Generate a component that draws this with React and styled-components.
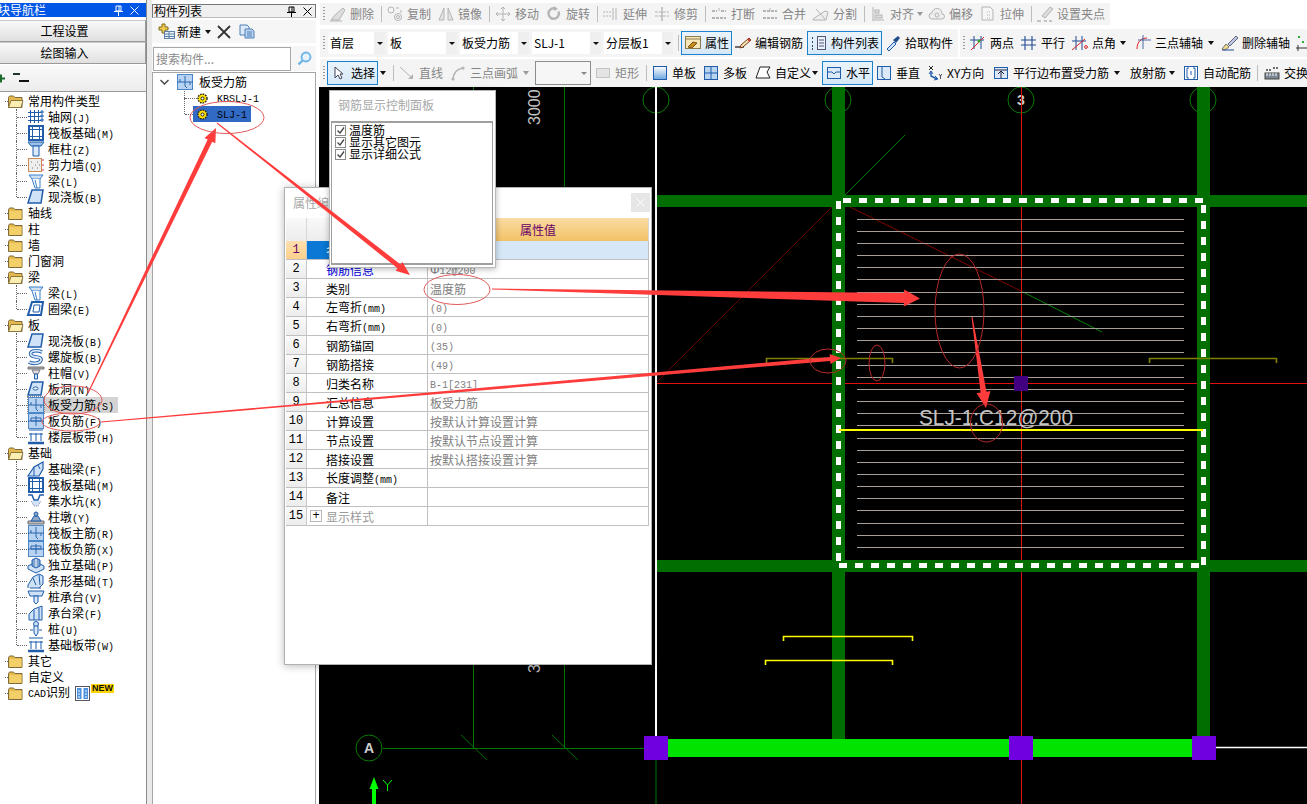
import React from 'react';
import styled, { createGlobalStyle } from 'styled-components';

const Global = createGlobalStyle`
  html, body { margin: 0; padding: 0; background: #fff; }
  body { font-family: "Noto Sans CJK SC", "Liberation Sans", sans-serif; font-size: 12px; line-height: 16px; color: #000; }
  * { box-sizing: border-box; }
`;

const Page = styled.div`position: relative; display: flex; width: 1307px; height: 804px; overflow: hidden; background: #fff;`;

/* ---------- shared text ---------- */
const Latin = styled.span`font-family: "Liberation Mono", monospace; font-size: 10px;`;
const Mixed = ({ text }) => text.split(/([\x00-\x7f]+)/).map((p, i) => (/^[\x00-\x7f]+$/.test(p) ? <Latin key={i}>{p}</Latin> : p));

const Svg = ({ children, w = 16, h = 16, vb }) => (
  <svg width={w} height={h} viewBox={vb || `0 0 ${w} ${h}`} fill="none" style={{ display: 'block', overflow: 'visible' }}>{children}</svg>
);

/* ---------- icons: dimmed toolbar ---------- */
const G = '#b4b4b4';
const dim = { stroke: G, strokeWidth: 1 };
const B = '#1f5dab';
const ICONS = {
  erase: <><path d="M1 14h8l6-10-2-2-8 7z" fill="#dedede" {...dim} /><path d="M0 15h12" {...dim} /></>,
  copy: <><circle cx="4" cy="4" r="3" {...dim} /><circle cx="11" cy="11" r="3.5" {...dim} /><circle cx="11" cy="11" r="1.5" {...dim} /><path d="M9 2h3M14 4v3" {...dim} /></>,
  mirror: <><path d="M1 14 6 2v12zM15 14 10 2v12z" fill="#e4e4e4" {...dim} /></>,
  move: <path d="M8 1v14M1 8h14M8 1 6 3M8 1l2 2M8 15l-2-2M8 15l2-2M1 8l2-2M1 8l2 2M15 8l-2-2M15 8l-2 2" {...dim} />,
  rotate: <><path d="M12.5 5.5a5.2 5.2 0 1 1-3.5-3" stroke={G} strokeWidth="2.4" /><path d="M8 0l4 3-4 2z" fill={G} /></>,
  extend: <><path d="M13 2v12M10 2v12" {...dim} /><path d="M0 6h8M0 10h8" {...dim} strokeDasharray="2 1" /></>,
  trim: <><path d="M8 1v14M1 6h14M1 10h14" {...dim} strokeDasharray="3 1" /><path d="M8 1v14" {...dim} /></>,
  cut: <><path d="M1 5h5M10 5h5M1 12h14" {...dim} strokeWidth="2" strokeDasharray="3 1" /><path d="M8 2v3" {...dim} /></>,
  merge: <><path d="M1 5h14M1 12h14" {...dim} strokeWidth="2" strokeDasharray="3 1" /><path d="M8 2v3" {...dim} /></>,
  split: <><path d="M0 13 12 5l3 1-2 8H0z" fill="#eee" {...dim} /><path d="M3 3l9 10" {...dim} /></>,
  align: <><path d="M3 1v14M3 14h11" {...dim} /><rect x="5" y="4" width="4" height="3" fill="#ddd" {...dim} /><rect x="5" y="9" width="7" height="3" fill="#ddd" {...dim} /></>,
  offset: <><path d="M3 13a3 3 0 0 1 0-6 5 5 0 0 1 10 1 2.5 2.5 0 0 1 0 5z" fill="#eee" {...dim} /><circle cx="8" cy="9" r="2" {...dim} /></>,
  stretch: <><path d="M2 1h8l3 3v10H2z" fill="#f6f6f6" {...dim} /><path d="M7 6h3M7 9h3M7 12h3" {...dim} strokeDasharray="1 1" /></>,
  handle: <><path d="M5 10 13 1l3 2-8 9z" fill="#ddd" {...dim} /><path d="M0 15h4M7 15h3M12 15h3" {...dim} strokeWidth="1.5" /></>,
  /* bright toolbar */
  props: <><rect x="0.5" y="1.5" width="15" height="12" fill="#f7e7b8" stroke="#8a7a50" /><path d="M0 4h16" stroke="#8a7a50" /><path d="M3 12l5-5 4 1-5 5z" fill="#c98a20" stroke="#7a5010" /></>,
  pen: <><path d="M0 12h9" stroke="#333" strokeWidth="1.4" /><path d="M6 10 14 3l2 2-8 7-3 1z" fill="#f5e6b0" stroke="#7a3a20" /><path d="M13 4l2 2" stroke="#c33" strokeWidth="2" /></>,
  list: <><path d="M1 3h2M1 7h2M1 11h2M1 14h2" stroke="#446" strokeDasharray="1 1" strokeWidth="2" /><rect x="6.5" y="1.5" width="8" height="13" fill="#eaf2fb" stroke="#557" /><path d="M8 5h5M8 8h5M8 11h5" stroke="#557" /></>,
  pick: <><path d="M2 14l7-7 2 2-7 7z" fill="#cfe4fa" stroke={B} /><path d="M8 5l5-4 2 2-4 5z" fill="#1f4d8b" /></>,
  twopt: <><path d="M4 1v13M11 1v13" stroke="#224a96" /><path d="M0 5h14" stroke="#224a96" /><path d="M1 15 14 2" stroke="#d22" /><circle cx="9" cy="6" r="1.6" fill="#3a3" /></>,
  para: <path d="M4 1v14M11 1v14M0 5h15M0 10h15" stroke="#224a96" strokeWidth="1.1" />,
  angle: <><path d="M4 1v14M10 1v14M0 6h14" stroke="#224a96" /><path d="M0 15 13 4" stroke="#d22" /><circle cx="14" cy="12" r="1.4" stroke="#d22" /></>,
  arc3: <><path d="M2 14C2 6 7 3 12 3" stroke="#d22" /><path d="M8 0v14M3 5h13" stroke="#224a96" strokeWidth=".8" /></>,
  delaxis: <><path d="M0 14 4 9l3 3-4 3z" fill="#f2d98e" stroke="#776" /><path d="M6 9l8-8 2 2-8 8z" fill="#bcc7e6" stroke="#667" /><path d="M0 15h12" stroke="#224a96" /></>,
  mini: <><rect x="2" y="1" width="2" height="2" fill="#3a3" /><rect x="6" y="6" width="2" height="2" fill="#3a3" /><path d="M0 13h12M2 10v6" stroke="#333" /></>,
  cursor: <path d="M4 2v11l3-3 2 4 2-1-2-4h3z" fill="#fff" stroke="#445" />,
  line: <><path d="M1 2l12 11" stroke={G} /><path d="M14 14H9l5-5z" fill={G} /></>,
  arc: <><path d="M3 15C3 8 7 4 13 3" stroke={G} strokeWidth="1.6" /><circle cx="3" cy="14" r="1.6" fill={G} /><circle cx="13" cy="3" r="1.6" fill={G} /></>,
  rect: <rect x="1.5" y="3.5" width="13" height="9" fill="#e4e4e4" stroke="#c4c4c4" />,
  single: <><rect x="1.5" y="1.5" width="13" height="13" fill="url(#sg)" stroke={B} /></>,
  multi: <><rect x="1.5" y="1.5" width="13" height="13" fill="#b9d4f0" stroke={B} /><path d="M8 1v14M1 8h14" stroke={B} /></>,
  custom: <path d="M5 2h10l-3 5 3 6H1z" fill="#fff" stroke="#222" />,
  horiz: <><rect x="1.5" y="2.5" width="13" height="11" fill="#dce9f8" stroke={B} /><path d="M2 7h4l2 2 2-2h4" stroke={B} /></>,
  vert: <><rect x="1.5" y="1.5" width="13" height="13" fill="#dce9f8" stroke={B} /><path d="M6 2v10l3 2" stroke={B} /></>,
  xy: <><path d="M2 1l4 4M6 1 2 5" stroke="#222" /><path d="M4 6v5l6 3" stroke={B} strokeWidth="1.4" /><path d="M2 9l2-3 2 3M8 11l3 3-4 1" stroke={B} /><path d="M12 9l1.5 2 1.5-2M13.5 11v3" stroke="#222" strokeWidth=".8" /></>,
  pbuild: <><rect x="1.5" y="2.5" width="13" height="11" fill="#dce9f8" stroke={B} /><path d="M8 13V7M5 9l3-3 3 3M2 5h12" stroke="#224" /></>,
  auto: <><rect x="1.5" y="1.5" width="13" height="13" fill="#fff" stroke={B} /><path d="M6 3H4v10h2M10 3h2v10h-2M8 6v4" stroke={B} /></>,
  swap: <><rect x="1" y="8" width="14" height="6" fill="#7a8794" stroke="#444" /><path d="M3 8v3M6 8v3M9 8v3M12 8v3" stroke="#fff" /><path d="M2 5h5M9 3h5" stroke="#444" strokeWidth="1.5" strokeDasharray="2 1" /></>,
  /* tree */
  grid: <><path d="M2.5 1v13M6.5 1v13M10.5 1v13M0 3.5h13M0 7.5h13M0 11.5h13" stroke={B} /><path d="M13 2h2v2h-2zM13 6h2v2h-2zM13 10h2v2h-2z" stroke={B} fill="#d9e8fa" /></>,
  raft: <><rect x="1" y="1" width="14" height="14" fill="#fff" stroke={B} strokeWidth="2" /><rect x="4.5" y="4.5" width="7" height="7" stroke={B} /><path d="M1 4.5h3M12 4.5h3M1 11.5h3M12 11.5h3M4.5 1v3M11.5 1v3M4.5 12v3M11.5 12v3" stroke={B} /></>,
  col: <><path d="M0 1h16l-3 4H3z" fill="#9cc2ea" stroke={B} /><path d="M5 5h6v10H5z" fill="#dbe9f9" stroke={B} /></>,
  wall: <><rect x="0.5" y="1.5" width="13" height="13" fill="#eee" stroke="#d08a50" /><path d="M3 5h1M7 8h1M4 11h1M9 11h1M9 5h1M11 8h1" stroke="#777" /><path d="M14 3h2M14 8h2M14 13h2" stroke="#c36" /></>,
  beam: <><path d="M1 2h14l-3 4H4z" fill="#cfe2f7" stroke="#3a7fc7" /><path d="M4 6l3 9h5V6" fill="#fff" stroke="#3a7fc7" /><path d="M7 7l2 8" stroke="#3a7fc7" /></>,
  slab: <path d="M4 1h11l-2 13H0z" fill="#cfe2f7" stroke={B} strokeWidth="1.5" />,
  ring: <><path d="M4 1h11l-2 13H0z" fill="#fff" stroke={B} strokeWidth="2" /><path d="M6 4h6l-1 7H5z" stroke={B} /></>,
  spiral: <><path d="M14 3C6 0 1 3 3 6s11 1 10 5-9 4-12 2" stroke={B} strokeWidth="3.6" /><path d="M14 3C6 0 1 3 3 6s11 1 10 5-9 4-12 2" stroke="#d9e8fa" strokeWidth="1.8" /></>,
  cap: <><path d="M0 2h16v2H0z" fill="#aaa" stroke="#777" /><path d="M4 5h8L10 9H6z" fill="#ddd" stroke="#778" /><path d="M6.5 9h3v5h-3z" fill="#cfe2f7" stroke={B} /></>,
  hole: <><path d="M4 1h11l-2 13H0z" fill="#cfe2f7" stroke={B} strokeWidth="1.5" /><ellipse cx="7.5" cy="7.5" rx="2.5" ry="1.5" fill="#fff" stroke={B} /></>,
  rebar: <><rect x="0.5" y="0.5" width="15" height="15" fill="#b8d3f1" stroke="#4c86c7" /><path d="M0 8h16M8 2v10l2 2M8 2" stroke="#2b66ad" /><path d="M3 5v3M13 8v3" stroke="#2b66ad" /></>,
  neg: <><rect x="0.5" y="0.5" width="15" height="15" fill="#b8d3f1" stroke="#4c86c7" /><path d="M3 5h10v3H3zM0 8h16M8 3v10" stroke="#2b66ad" /></>,
  band: <><path d="M1 1h14M3 4v8M8 4v8M13 4v8M1 5h14" stroke={B} /><path d="M0 14h16" stroke={B} strokeWidth="2.5" /></>,
  fbeam: <><path d="M0 15 6 6l9-5v7l-4 7z" fill="#cfe2f7" stroke={B} strokeWidth="1.2" /><path d="M6 6v9M10 4l2 4" stroke={B} /></>,
  pit: <><path d="M0 2h4l2 5h4l2-5h4" stroke={B} strokeWidth="1.5" /><path d="M3 8l3 5h4l3-5" fill="#cfe2f7" stroke="#88a" strokeDasharray="1 1" /></>,
  pier: <><path d="M0 12h16v3H0z" fill="#bbb" stroke="#667" /><path d="M3 12l3-5h4l3 5z" fill="#8fa8c8" stroke={B} /><circle cx="8" cy="5" r="2" fill="#8fa8c8" stroke={B} /></>,
  iso: <><path d="M0 9l8-4 8 4v3l-8 4-8-4z" fill="#cfe2f7" stroke={B} /><path d="M4 3l4-2 4 2v6l-4 2-4-2z" fill="#7fa3d0" stroke={B} /><path d="M8 2v8" stroke="#fff" /></>,
  strip: <><path d="M0 15v-3l5-8 6-3 4 2v8l-4 4" fill="#cfe2f7" stroke={B} /><path d="M2 15h11M5 5l3 7M11 2l1 10" stroke={B} /></>,
  capbed: <><path d="M0 2h16l-2 5H2z" fill="#cfe2f7" stroke={B} /><path d="M6 7h4v6l-2 2-2-2z" fill="#dbe9f9" stroke={B} /></>,
  capbeam: <><path d="M1 15V9l5-5 8-3v14z" fill="#cfe2f7" stroke={B} /><path d="M6 5v10M11 3v12" stroke={B} /></>,
  pile: <><circle cx="8" cy="3" r="2.5" fill="#cfe2f7" stroke={B} /><path d="M6 5h4v7l-2 3-2-3z" fill="#dbe9f9" stroke={B} /><path d="M2 9h3M11 9h3" stroke={B} /></>,
  cad: <><rect x="0.5" y="0.5" width="14" height="14" fill="#fff" stroke="#556" /><rect x="2" y="2" width="4.5" height="11" fill="#4a90dc" /><rect x="8.5" y="2" width="4.5" height="11" fill="#4a90dc" /><path d="M3 5h2M3 8h2M3 11h2M10 5h2M10 8h2M10 11h2" stroke="#fff" /></>,
};
const Icon = ({ name }) => <Svg>{ICONS[name]}</Svg>;

/* ---------- module nav panel ---------- */
const NavPanel = styled.aside`flex: 0 0 147px; height: 100%; overflow: hidden; border-right: 1px solid #8c8c8c;`;
const NavInner = styled.div`width: 162px; margin-left: -16px; padding-top: 3px; display: flex; flex-direction: column; height: 100%;`;
const NavTitle = styled.div`
  flex: 0 0 14px; display: flex; align-items: center; background: #0056e6; color: #fff;
  padding: 0 4px 0 2px; font-size: 12px; line-height: 14px;
`;
const TitleText = styled.span`flex: 1; white-space: nowrap;`;
const TitleBtn = styled.span`
  flex: 0 0 16px; height: 12px; display: flex; align-items: center; justify-content: center;
`;
const NavButton = styled.div`
  flex: 0 0 22px; margin-top: ${(p) => p.$t}px; display: flex; align-items: center; justify-content: center;
  background: linear-gradient(#f9f9f9, #e0e0e0); border-bottom: 1px solid #9a9a9a; border-right: 1px solid #9a9a9a; border-top: 1px solid #c8c8c8;
`;
const NavTools = styled.div`
  flex: 0 0 27px; margin-top: 1px; display: flex; align-items: center; gap: 7px; padding-left: 13px;
  background: linear-gradient(#fafafa, #ececec); border-bottom: 1px solid #9a9a9a;
`;
const Tree = styled.div`flex: 1; background: #fff; padding-top: 1px;`;
const Row = styled.div`
  position: relative; height: 16px; display: flex; align-items: center; white-space: nowrap;
  padding-left: ${(p) => p.$pl}px;
`;
const RootStub = styled.i`position: absolute; left: 21px; top: 8px; width: 3px; border-top: 1px dotted #666;`;
const ChildRow = styled(Row)`
  &::before { content: ""; position: absolute; left: 32px; top: 0; bottom: ${(p) => (p.$last ? '8px' : '0')}; border-left: 1px dotted #666; }
  &::after { content: ""; position: absolute; left: 33px; width: 10px; top: 8px; border-top: 1px dotted #666; }
`;
const RowIcon = styled.span`
  flex: 0 0 16px; height: 16px; position: relative; z-index: 1;
  ${(p) => p.$sel && 'outline: 1px dotted #888; outline-offset: 0;'}
`;
const RowLabel = styled.span`
  height: 16px; display: inline-block; padding: 0 4px 0 4px; background: ${(p) => (p.$sel ? '#d4d4d4' : 'transparent')};
`;
const FolderLabel = styled.span`padding-left: 5px;`;
const NewBadge = styled.b`
  align-self: flex-start; margin-top: -1px; background: #ffd400; color: #111; font: bold 9px/9px "Liberation Sans", sans-serif; padding: 0 1px; margin-left: 1px;
`;
const CadIcon = styled.span`flex: 0 0 15px; margin-left: 5px;`;

const Folder = ({ open }) => (
  <Svg w={15} h={13}>
    <path d="M.5 2.5 1.5 1h4l1.5 1.5h7v10H.5z" fill="#e5b94d" stroke="#7c6a3a" />
    {open
      ? <path d="M.5 12.5 3 5.5h12l-2 7z" fill="#fbeeb0" stroke="#8a7440" />
      : <rect x="1.5" y="4" width="12" height="8" fill="#f3cf6a" />}
  </Svg>
);

const TREE = [
  { f: '常用构件类型', open: true, kids: [['grid', '轴网(J)'], ['raft', '筏板基础(M)'], ['col', '框柱(Z)'], ['wall', '剪力墙(Q)'], ['beam', '梁(L)'], ['slab', '现浇板(B)']] },
  { f: '轴线' }, { f: '柱' }, { f: '墙' }, { f: '门窗洞' },
  { f: '梁', open: true, kids: [['beam', '梁(L)'], ['ring', '圈梁(E)']] },
  { f: '板', open: true, kids: [['slab', '现浇板(B)'], ['spiral', '螺旋板(B)'], ['cap', '柱帽(V)'], ['hole', '板洞(N)'], ['rebar', '板受力筋(S)', true], ['neg', '板负筋(F)'], ['band', '楼层板带(H)']] },
  { f: '基础', open: true, kids: [['fbeam', '基础梁(F)'], ['raft', '筏板基础(M)'], ['pit', '集水坑(K)'], ['pier', '柱墩(Y)'], ['rebar', '筏板主筋(R)'], ['neg', '筏板负筋(X)'], ['iso', '独立基础(P)'], ['strip', '条形基础(T)'], ['capbed', '桩承台(V)'], ['capbeam', '承台梁(F)'], ['pile', '桩(U)'], ['band', '基础板带(W)']] },
  { f: '其它' }, { f: '自定义' }, { f: 'CAD识别', badge: true },
];

const PinIcon = () => <Svg w={9} h={11}><path d="M2 1h5v5H2zM0 6.500h9M4.500 7v4" stroke="currentColor" /><path d="M5 1v5" stroke="currentColor" /></Svg>;
const CloseIcon = () => <Svg w={9} h={9}><path d="M.5.5l8 8M8.500.5l-8 8" stroke="currentColor" /></Svg>;

const Nav = () => (
  <NavPanel>
    <NavInner>
      <NavTitle>
        <TitleText>模块导航栏</TitleText>
        <TitleBtn><PinIcon /></TitleBtn><TitleBtn><CloseIcon /></TitleBtn>
      </NavTitle>
      <NavButton $t={3}>工程设置</NavButton>
      <NavButton $t={0}>绘图输入</NavButton>
      <NavTools>
        <Svg w={9} h={9}><path d="M0 4.500h8M4 .500v8" stroke="#1a6b2a" strokeWidth="2" /></Svg>
        <Svg w={16} h={10}><path d="M0 1h7" stroke="#233" strokeWidth="2" /><path d="M6 8h10" stroke="#111" strokeWidth="2" /></Svg>
      </NavTools>
      <Tree>
        {TREE.map((n, i) => (
          <React.Fragment key={i}>
            <Row $pl={24}>
              <RootStub />
              <Folder open={n.open} />
              <FolderLabel><Mixed text={n.f} /></FolderLabel>
              {n.badge && <><CadIcon><Svg w={15} h={15}>{ICONS.cad}</Svg></CadIcon><NewBadge>NEW</NewBadge></>}
            </Row>
            {n.kids && n.kids.map(([ic, t, sel], k) => (
              <ChildRow key={k} $pl={44} $last={k === n.kids.length - 1}>
                <RowIcon $sel={sel}><Icon name={ic} /></RowIcon>
                <RowLabel $sel={sel}><Mixed text={t} /></RowLabel>
              </ChildRow>
            ))}
          </React.Fragment>
        ))}
      </Tree>
    </NavInner>
  </NavPanel>
);

/* ---------- component list panel ---------- */
const Gutter = styled.div`flex: 0 0 5px; background: #e9e9e9;`;
const ListPanel = styled.section`flex: 0 0 164px; height: 100%; display: flex; flex-direction: column; padding-top: 4px;`;
const ListTitle = styled.div`
  flex: 0 0 14px; min-height: 0; display: flex; align-items: center; padding-left: 1px; background: #f0f0f0; border: 1px solid #777; border-bottom-color: #bbb; line-height: 12px;
`;
const ListTools = styled.div`flex: 0 0 23px; margin-top: 2px; display: flex; align-items: center; background: #f6f6f6; padding-left: 5px;`;
const NewLabel = styled.span`margin-left: 1px;`;
const Caret = styled.span`
  flex: 0 0 ${(p) => p.$w || 7}px; display: flex;
  &::before { content: ""; border-left: 3.5px solid transparent; border-right: 3.5px solid transparent; border-top: 4px solid ${(p) => p.$c || '#111'}; }
`;
const SearchRow = styled.div`flex: 0 0 25px; margin-top: 3px; display: flex; align-items: center; background: #f6f6f6;`;
const SearchBox = styled.div`
  width: 138px; height: 24px; margin-left: 1px; border: 1px solid #a8a8a8; background: #fff; color: #8a8a8a; font-size: 12px; padding: 3px 2px; line-height: 16px;
`;
const SearchBtn = styled.span`margin-left: 6px;`;
const ListTree = styled.div`flex: 1; margin-top: 1px; border: 1px solid #a6a6a6; border-bottom: 0; background: #fff; padding-top: 1px;`;
const LRow = styled.div`
  position: relative; height: 16px; display: flex; align-items: center; white-space: nowrap; padding-left: ${(p) => p.$pl}px;
`;
const LChild = styled(LRow)`
  &::before { content: ""; position: absolute; left: 31px; top: -8px; height: 16px; border-left: 1px dotted #666; }
  &::after { content: ""; position: absolute; left: 32px; top: 8px; width: 12px; border-top: 1px dotted #666; }
`;
const Selected = styled.span`
  display: flex; align-items: center; height: 16px; width: 58px; margin-left: -4px; padding-left: 4px; background: #316ac5; position: relative; z-index: 1;
`;
const LeafLabel = styled.span`margin-left: 9px;`;
const Label16 = styled.span`margin-left: 6px;`;
const Spacer = styled.span`flex: 0 0 ${(p) => p.$w}px;`;

const Gear = () => (
  <Svg w={11} h={11}>
    <circle cx="5.500" cy="5.500" r="4.500" fill="#ffe100" stroke="#222" strokeWidth="1.400" strokeDasharray="1.600 1" />
    <circle cx="5.500" cy="5.500" r="1.500" fill="#fff" stroke="#222" />
  </Svg>
);

const List = () => (
  <ListPanel>
    <ListTitle>
      <TitleText>构件列表</TitleText>
      <TitleBtn><PinIcon /></TitleBtn><TitleBtn><CloseIcon /></TitleBtn>
    </ListTitle>
    <ListTools>
      <Svg w={19} h={17}>
        <path d="M3 3h3V0h3v3h3v3H9v3H6V6H3z" transform="translate(-1 1)" fill="#f2cd52" stroke="#7f6a1c" />
        <rect x="7.500" y="8.500" width="10" height="7" fill="#eef4fb" stroke="#5b7fa8" />
        <path d="M8 11h9M8 13.500h9M12 9v6" stroke="#5b7fa8" />
      </Svg>
      <NewLabel>新建</NewLabel>
      <Spacer $w={4} />
      <Caret $w={12} />
      <Svg w={14} h={14}><path d="M1 1l12 12M13 1 1 13" stroke="#333" strokeWidth="1.800" /></Svg>
      <Spacer $w={8} />
      <Svg w={16} h={15}>
        <path d="M1 1h7l2 2v8H1z" fill="#dce9f8" stroke="#4f7fb5" />
        <path d="M6 5h7l2 2v7H6z" fill="#bcd6f2" stroke="#4f7fb5" />
        <path d="M8 8h5M8 10h5M8 12h5" stroke="#4f7fb5" />
      </Svg>
    </ListTools>
    <SearchRow>
      <SearchBox>搜索构件...</SearchBox>
      <SearchBtn>
        <Svg w={15} h={15}>
          <circle cx="9" cy="6" r="4.500" fill="#e6f3fd" stroke="#6db4e8" strokeWidth="1.800" />
          <path d="M5.500 9.500 1.500 13.500" stroke="#6db4e8" strokeWidth="2.400" />
        </Svg>
      </SearchBtn>
    </SearchRow>
    <ListTree>
      <LRow $pl={7}>
        <Svg w={9} h={6}><path d="M.5 1 4.500 5l4-4" stroke="#444" strokeWidth="1.400" /></Svg>
        <Spacer $w={8} />
        <RowIcon><Icon name="rebar" /></RowIcon>
        <Label16><Mixed text="板受力筋" /></Label16>
      </LRow>
      <LChild $pl={44}>
        <Gear />
        <LeafLabel><Mixed text="KBSLJ-1" /></LeafLabel>
      </LChild>
      <LChild $pl={44}>
        <Selected><Gear /><LeafLabel><Mixed text="SLJ-1" /></LeafLabel></Selected>
      </LChild>
    </ListTree>
  </ListPanel>
);

/* ---------- ribbon ---------- */
const Workspace = styled.main`flex: 1; min-width: 0; display: flex; flex-direction: column; padding-top: 3px;`;
const Bars = styled.div`display: flex; padding-left: 4px; margin-top: ${(p) => p.$t}px;`;
const Bar = styled.div`
  display: flex; align-items: center; height: ${(p) => p.$h}px; width: ${(p) => p.$w}px; background: #f4f4f4; overflow: hidden; flex: none; margin-left: ${(p) => p.$ml || 0}px;
`;
const Slot = styled.div`flex: 0 0 ${(p) => p.$w}px; height: 100%; display: flex; align-items: center; white-space: nowrap;`;
const Grip = styled(Slot)`
  padding-left: 3px;
  &::before { content: ""; width: 2px; height: 14px; background-image: linear-gradient(#999 50%, transparent 50%); background-size: 2px 3px; }
`;
const Sep = styled(Slot)`
  &::before { content: ""; height: 16px; border-left: 1px solid #bdbdbd; }
`;
const ToolIcon = styled.span`flex: 0 0 16px; height: 16px; margin-right: 4px;`;
const ToolLabel = styled.span`color: ${(p) => (p.$dim ? '#868686' : '#000')};`;
const ActiveBtn = styled.div`
  width: ${(p) => p.$w}px; height: 24px; display: flex; align-items: center; padding-left: 3px;
  border: 1px solid #1b82cf; background: linear-gradient(#eaf4fc, #d6e8f7);
`;
const ComboBox = styled.div`
  display: flex; width: ${(p) => p.$w}px; height: 22px; background: #fff; padding-left: 2px;
  align-items: center;
`;
const ComboText = styled.span`flex: 1;`;
const ComboArrow = styled.span`
  flex: 0 0 11px; align-self: stretch; display: flex; align-items: center; justify-content: center; background: #efefef;
  &::before { content: ""; border-left: 3px solid transparent; border-right: 3px solid transparent; border-top: 3px solid #111; }
`;
const SelectBox = styled.div`
  width: ${(p) => p.$w}px; height: 24px; display: flex; align-items: center; justify-content: flex-end; padding-right: 3px; border: 1px solid #8d8d8d; background: #f6f6f6;
  &::after { content: ""; border-left: 3px solid transparent; border-right: 3px solid transparent; border-top: 3px solid #888; }
`;

const Tools = ({ end, items }) => items.map((it, i) => {
  const w = (i + 1 < items.length ? items[i + 1].x : end) - it.x;
  if (it.k === 'grip') return <Grip key={i} $w={w} />;
  if (it.k === 'sep') return <Sep key={i} $w={w} />;
  if (it.k === 'caret') return <Slot key={i} $w={w}><Caret $c={it.c} /></Slot>;
  if (it.k === 'combo') return <Slot key={i} $w={w}><ComboBox $w={it.b}><ComboText>{it.t}</ComboText><ComboArrow /></ComboBox></Slot>;
  if (it.k === 'select') return <Slot key={i} $w={w}><SelectBox $w={it.b} /></Slot>;
  if (it.k === 'on') {
    return <Slot key={i} $w={w}><ActiveBtn $w={it.b}><ToolIcon><Icon name={it.i} /></ToolIcon><ToolLabel>{it.t}</ToolLabel></ActiveBtn></Slot>;
  }
  return (
    <Slot key={i} $w={w}>
      {it.i && <ToolIcon><Icon name={it.i} /></ToolIcon>}
      {it.t && <ToolLabel $dim={it.d}>{it.t}</ToolLabel>}
    </Slot>
  );
});

const grip = (x) => ({ x, k: 'grip' });
const sep = (x) => ({ x, k: 'sep' });
const car = (x, c) => ({ x, k: 'caret', c });
const dt = (x, i, t) => ({ x, i, t, d: true });
const tl = (x, i, t) => ({ x, i, t });

const R1 = [grip(320), dt(330, 'erase', '删除'), sep(381), dt(387, 'copy', '复制'), dt(438, 'mirror', '镜像'), sep(489), dt(495, 'move', '移动'), dt(546, 'rotate', '旋转'), sep(597), dt(603, 'extend', '延伸'), dt(654, 'trim', '修剪'), sep(705), dt(711, 'cut', '打断'), dt(762, 'merge', '合并'), dt(813, 'split', '分割'), sep(864), dt(870, 'align', '对齐'), car(917, '#999'), dt(929, 'offset', '偏移'), dt(980, 'stretch', '拉伸'), sep(1031), dt(1037, 'handle', '设置夹点')];
const R2A = [grip(320), { x: 328, k: 'combo', b: 57, t: '首层' }, { x: 388, k: 'combo', b: 69, t: '板' }, { x: 460, k: 'combo', b: 69, t: '板受力筋' }, { x: 532, k: 'combo', b: 69, t: 'SLJ-1' }, { x: 604, k: 'combo', b: 69, t: '分层板1' }, sep(678), { x: 681, k: 'on', b: 51, i: 'props', t: '属性' }, tl(735, 'pen', '编辑钢筋'), { x: 807, k: 'on', b: 75, i: 'list', t: '构件列表' }, tl(885, 'pick', '拾取构件')];
const R2B = [grip(960), tl(970, 'twopt', '两点'), tl(1021, 'para', '平行'), tl(1072, 'angle', '点角'), car(1120), tl(1135, 'arc3', '三点辅轴'), car(1208), tl(1222, 'delaxis', '删除辅轴'), tl(1296, 'mini')];
const R3 = [grip(320), { x: 327, k: 'on', b: 51, i: 'cursor', t: '选择' }, car(380), sep(393), dt(399, 'line', '直线'), dt(450, 'arc', '三点画弧'), car(523, '#999'), { x: 535, k: 'select', b: 56 }, dt(595, 'rect', '矩形'), sep(646), tl(652, 'single', '单板'), tl(703, 'multi', '多板'), tl(755, 'custom', '自定义'), car(812), { x: 822, k: 'on', b: 51, i: 'horiz', t: '水平' }, tl(876, 'vert', '垂直'), tl(927, 'xy', 'XY方向'), tl(993, 'pbuild', '平行边布置受力筋'), car(1114), tl(1130, null, '放射筋'), car(1169), tl(1183, 'auto', '自动配筋'), sep(1257), tl(1264, 'swap', '交换')];

const Ribbon = () => (
  <>
    <Bars $t={0}><Bar $w={790} $h={22}><Tools end={1110} items={R1} /></Bar></Bars>
    <Bars $t={4}>
      <Bar $w={638} $h={28}><Tools end={958} items={R2A} /></Bar>
      <Bar $w={347} $h={28} $ml={2}><Tools end={1307} items={R2B} /></Bar>
    </Bars>
    <Bars $t={2}><Bar $w={987} $h={28}><Tools end={1307} items={R3} /></Bar></Bars>
  </>
);

/* ---------- CAD canvas ---------- */
const CanvasWrap = styled.div`flex: 1; margin-left: 3px; background: #000; overflow: hidden;`;
const DG = '#006e00';
const Dashes = ({ n, x, y, dx, dy, w, h }) => Array.from({ length: n }, (_, i) => (
  <rect key={i} x={x + dx * i} y={y + dy * i} width={w} height={h} fill="#fff" />
));
const BARS = [219, 231, 243, 255, 267, 279, 292, 304, 316, 328, 340, 352, 365, 377, 389, 401, 413, 425, 438, 450, 462, 474, 486, 498, 510, 523, 535, 547];
const Bracket = ({ x1, x2, y, c, t = 5 }) => <path d={`M${x1 + .5} ${y + t}V${y + .5}H${x2 - .5}V${y + t}`} stroke={c} strokeWidth="1.6" fill="none" />;
const Tick = ({ x, y }) => <path d={`M${x - 12} ${y - 13}L${x + 14} ${y + 12}`} stroke="#006e00" />;
const Bubble = ({ x, y, t }) => (
  <>
    <circle cx={x} cy={y} r="13" fill="#000" stroke="#0a7a0a" />
    {t && <text x={x} y={y + 5} textAnchor="middle" fontFamily='"Liberation Sans", sans-serif' fontSize="14" fontWeight="bold" fill="#cfcfcf">{t}</text>}
  </>
);

const Canvas = () => (
  <CanvasWrap>
    <Svg w={988} h={717} vb="319 87 988 717">
      <defs>
        <linearGradient id="sg" x1="0" y1="0" x2="0" y2="1"><stop offset="0" stopColor="#fff" /><stop offset="1" stopColor="#6ea5e0" /></linearGradient>
      </defs>
      <path d="M473.500 87V748M564.500 87V748M656 760V804M383 748.500H644" stroke="#007800" />
      <Tick x={473} y={748} /><Tick x={564} y={748} />
      <path d="M832 207 656 383" stroke="#600000" />
      <path d="M850 207 1021 291" stroke="#800000" />
      <path d="M1021 291 1102 332" stroke="#008000" />
      <path d="M905 135 845 195" stroke="#007800" />
      <Bubble x={656} y={100} /><Bubble x={838} y={100} /><Bubble x={1021} y={100} t="3" /><Bubble x={1203} y={100} />
      <path d="M1021.500 87V804" stroke="#e01010" />
      <path d="M656 383.500H1307" stroke="#e01010" />
      {BARS.map((y) => <path key={y} d={`M857 ${y + .5}H1184`} stroke="#a89f98" />)}
      <rect x="656" y="195" width="651" height="12" fill={DG} />
      <rect x="656" y="560" width="651" height="12" fill={DG} />
      <rect x="832" y="87" width="13" height="652" fill={DG} />
      <rect x="1197" y="87" width="13" height="652" fill={DG} />
      <rect x="655" y="87" width="2" height="650" fill="#fff" />
      <Dashes n={23} x={843} y={198} dx={16} dy={0} w={8} h={5} />
      <Dashes n={23} x={839} y={563} dx={16} dy={0} w={8} h={5} />
      <Dashes n={23} x={836} y={201} dx={0} dy={16} w={5} h={8} />
      <Dashes n={23} x={1201} y={205} dx={0} dy={16} w={5} h={8} />
      <Bracket x1={766} x2={893} y={358} c="#808000" />
      <Bracket x1={1149} x2={1277} y={358} c="#808000" />
      <Bracket x1={783} x2={913} y={636} c="#ffff00" />
      <Bracket x1={765} x2={893} y={660} c="#ffff00" />
      <rect x="839" y="429" width="364" height="2" fill="#ffff00" />
      <rect x="1014" y="376" width="14" height="15" fill="#400080" />
      <text x="919" y="425" textLength="154" lengthAdjust="spacingAndGlyphs" fontFamily='"Liberation Sans", sans-serif' fontSize="22" fill="#c4c4c4">SLJ-1:C12@200</text>
      <text transform="translate(540 125) rotate(-90)" fontFamily='"Liberation Sans", sans-serif' fontSize="16" fill="#c4c4c4">3000</text>
      <text transform="translate(540 673) rotate(-90)" fontFamily='"Liberation Sans", sans-serif' fontSize="16" fill="#c4c4c4">3000</text>
      <circle cx="369" cy="748" r="13" fill="#000" stroke="#0a7a0a" />
      <text x="369" y="753" textAnchor="middle" fontFamily='"Liberation Sans", sans-serif' fontSize="14" fontWeight="bold" fill="#cfcfcf">A</text>
      <rect x="668" y="739" width="524" height="18" fill="#00e400" />
      <rect x="644" y="736" width="24" height="24" fill="#7000e0" />
      <rect x="1009" y="736" width="24" height="24" fill="#7000e0" />
      <rect x="1192" y="736" width="24" height="24" fill="#7000e0" />
      <path d="M1216 747.500H1307" stroke="#fff" strokeWidth="1.600" />
      <path d="M372 804V789H369.500L374 777 378.500 789H376V804z" fill="#00ff00" />
      <path d="M383 780l4.500 5 4.500-5M387.500 785v6" stroke="#00ff00" />
    </Svg>
  </CanvasWrap>
);

/* ---------- floating windows ---------- */
const PropWindow = styled.div`
  position: absolute; left: 284px; top: 187px; width: 368px; height: 478px; z-index: 2; padding: 0 1px 0 1px;
  background: #fff; border: 1px solid #b2b2b2; box-shadow: 0 1px 8px rgba(0, 0, 0, .28);
`;
const WinTitle = styled.div`height: 30px; display: flex; align-items: center; justify-content: space-between; color: #a8a8a8; font-size: 12px; padding-left: 7px;`;
const WinClose = styled.span`
  width: 19px; height: 19px; margin-top: -1px; display: flex; align-items: center; justify-content: center; background: #e6e6e6; color: #fff; margin-right: 0;
`;
const Grid = styled.div`display: grid; grid-template-columns: 21px 121px 221px; width: 363px;`;
const HeadCell = styled.div`
  height: 23px; display: flex; align-items: center; justify-content: center; font-size: 12px; color: #680068;
  background: ${(p) => (p.$val ? 'linear-gradient(#fbdca3, #f2c266)' : 'linear-gradient(#f9f9f9, #ececec)')};
  border-right: 1px solid #d6d6d6;
`;
const NumCell = styled.div`
  height: 19px; display: flex; align-items: center; justify-content: center; font: 12px/19px "Liberation Mono", monospace;
  border-bottom: 1px solid #c0c0c0; border-right: 1px solid #c8c8c8;
  background: ${(p) => (p.$on ? 'linear-gradient(#fde0ad, #fdd08c)' : 'linear-gradient(#fbfbfb, #ececec)')};
  color: ${(p) => (p.$on ? '#680068' : '#000')};
`;
const NameCell = styled.div`
  height: 19px; display: flex; align-items: center; padding: 2px 0 0 19px; position: relative; white-space: nowrap;
  border-bottom: 1px solid #c0c0c0; border-right: 1px solid #c0c0c0;
  background: ${(p) => (p.$on ? '#0a78d4' : '#fff')};
  color: ${(p) => p.$c || '#000'};
`;
const ValCell = styled.div`
  height: 19px; display: flex; align-items: center; padding: 2px 0 0 2px; color: #808080; white-space: nowrap;
  border-bottom: 1px solid #c0c0c0; border-right: 1px solid #c0c0c0;
  background: ${(p) => (p.$on ? '#d6e8f8' : '#fff')};
`;
const Expand = styled.span`
  position: absolute; left: 3px; top: 3px; width: 12px; height: 12px; border: 1px solid #b8b8b8; color: #000; font: 12px/10px "Liberation Mono", monospace; text-align: center;
`;
const Sym = styled.span`font-family: "Liberation Sans", sans-serif; font-size: 12px;`;

const PROPS = [
  ['名称', 'SLJ-1'], ['钢筋信息', '12@200', '#0000e0'], ['类别', '温度筋'], ['左弯折(mm)', '(0)'], ['右弯折(mm)', '(0)'],
  ['钢筋锚固', '(35)'], ['钢筋搭接', '(49)'], ['归类名称', 'B-1[231]'], ['汇总信息', '板受力筋'], ['计算设置', '按默认计算设置计算'],
  ['节点设置', '按默认节点设置计算'], ['搭接设置', '按默认搭接设置计算'], ['长度调整(mm)', ''], ['备注', ''], ['显示样式', '', '#9a9a9a'],
];

const PropsDialog = () => (
  <PropWindow>
    <WinTitle>属性编辑器<WinClose><CloseIcon /></WinClose></WinTitle>
    <Grid>
      <HeadCell /><HeadCell>属性名称</HeadCell><HeadCell $val>属性值</HeadCell>
      {PROPS.map(([n, v, c], i) => (
        <React.Fragment key={i}>
          <NumCell $on={i === 0}>{i + 1}</NumCell>
          <NameCell $on={i === 0} $c={i === 0 ? '#fff' : c}>
            {i === 14 && <Expand>+</Expand>}
            <span><Mixed text={n} /></span>
          </NameCell>
          <ValCell $on={i === 0}>
            {i === 1 && <Sym>Φ</Sym>}
            <span><Mixed text={v} /></span>
          </ValCell>
        </React.Fragment>
      ))}
    </Grid>
  </PropWindow>
);

const CtlWindow = styled.div`
  position: absolute; left: 329px; top: 90px; width: 167px; height: 178px; z-index: 3; background: #fff;
  border: 1px solid #b8b8b8; box-shadow: 0 1px 6px rgba(0, 0, 0, .3); padding: 0 2px 2px 1px; display: flex; flex-direction: column;
`;
const CtlTitle = styled.div`flex: 0 0 30px; display: flex; align-items: center; padding: 0 0 2px 7px; color: #a8a8a8;`;
const CtlBody = styled.div`flex: 1; border: 1px solid #a0a0a0; border-top-width: 2px; border-bottom-width: 2px; padding: 1px 0 0 3px;`;
const CtlRow = styled.div`height: 12px; display: flex; align-items: center; gap: 3px; line-height: 12px; white-space: nowrap;`;
const Check = styled.span`flex: 0 0 11px; height: 11px; border: 1px solid #8a8a8a; background: #fff;`;

const ControlPanel = () => (
  <CtlWindow>
    <CtlTitle>钢筋显示控制面板</CtlTitle>
    <CtlBody>
      {['温度筋', '显示其它图元', '显示详细公式'].map((t) => (
        <CtlRow key={t}>
          <Check><Svg w={9} h={9}><path d="M1.500 4.500 4 7l4-5.500" stroke="#444" strokeWidth="1.300" /></Svg></Check>
          {t}
        </CtlRow>
      ))}
    </CtlBody>
  </CtlWindow>
);

/* ---------- hand-drawn markup over the screenshot ---------- */
const Overlay = styled.div`position: absolute; inset: 0; z-index: 5; pointer-events: none;`;
const RED = '#ff3c3c';
const Arrow = ({ x1, y1, x2, y2, a, b, hw, hl }) => {
  const d = Math.hypot(x2 - x1, y2 - y1);
  const ux = (x2 - x1) / d, uy = (y2 - y1) / d;
  const nx = -uy, ny = ux;
  const bx = x2 - ux * hl, by = y2 - uy * hl;
  const p = (x, y, n) => `${(x + nx * n).toFixed(1)},${(y + ny * n).toFixed(1)}`;
  const pts = [p(x1, y1, a / 2), p(bx, by, b / 2), p(bx, by, hw / 2), p(x2, y2, 0), p(bx, by, -hw / 2), p(bx, by, -b / 2), p(x1, y1, -a / 2)];
  return <polygon points={pts.join(' ')} fill={RED} />;
};
const Oval = ({ cx, cy, rx, ry, c = '#e25a5a' }) => <ellipse cx={cx} cy={cy} rx={rx} ry={ry} fill="none" stroke={c} strokeWidth="1" />;

const Markup = () => (
  <Overlay>
    <Svg w={1307} h={804}>
      <Arrow x1={88} y1={393} x2={216} y2={128} a={1} b={5} hw={12} hl={14} />
      <Arrow x1={217} y1={123} x2={410} y2={275} a={1} b={5} hw={11} hl={14} />
      <Arrow x1={101} y1={422} x2={841} y2={358} a={1} b={4} hw={10} hl={11} />
      <Arrow x1={492} y1={289} x2={920} y2={298.5} a={1} b={10} hw={17} hl={16} />
      <Arrow x1={972} y1={317} x2={986} y2={408} a={1} b={6} hw={14} hl={16} />
      <Oval cx={227} cy={117.500} rx={37} ry={16} />
      <Oval cx={73} cy={400} rx={29} ry={14} />
      <Oval cx={71} cy={422} rx={29} ry={9} />
      <Oval cx={457} cy={289.500} rx={33} ry={15} />
      <Oval cx={828} cy={361} rx={18} ry={12} c="#b82a2a" />
      <Oval cx={877} cy={363} rx={8} ry={18} c="#b82a2a" />
      <Oval cx={959.500} cy={311} rx={24.500} ry={57} c="#b82a2a" />
      <Oval cx={986.500} cy={423} rx={16} ry={19} c="#b82a2a" />
    </Svg>
  </Overlay>
);

export default function App() {
  return (
    <Page>
      <Global />
      <Nav />
      <Gutter />
      <List />
      <Workspace>
        <Ribbon />
        <Canvas />
      </Workspace>
      <PropsDialog />
      <ControlPanel />
      <Markup />
    </Page>
  );
}
